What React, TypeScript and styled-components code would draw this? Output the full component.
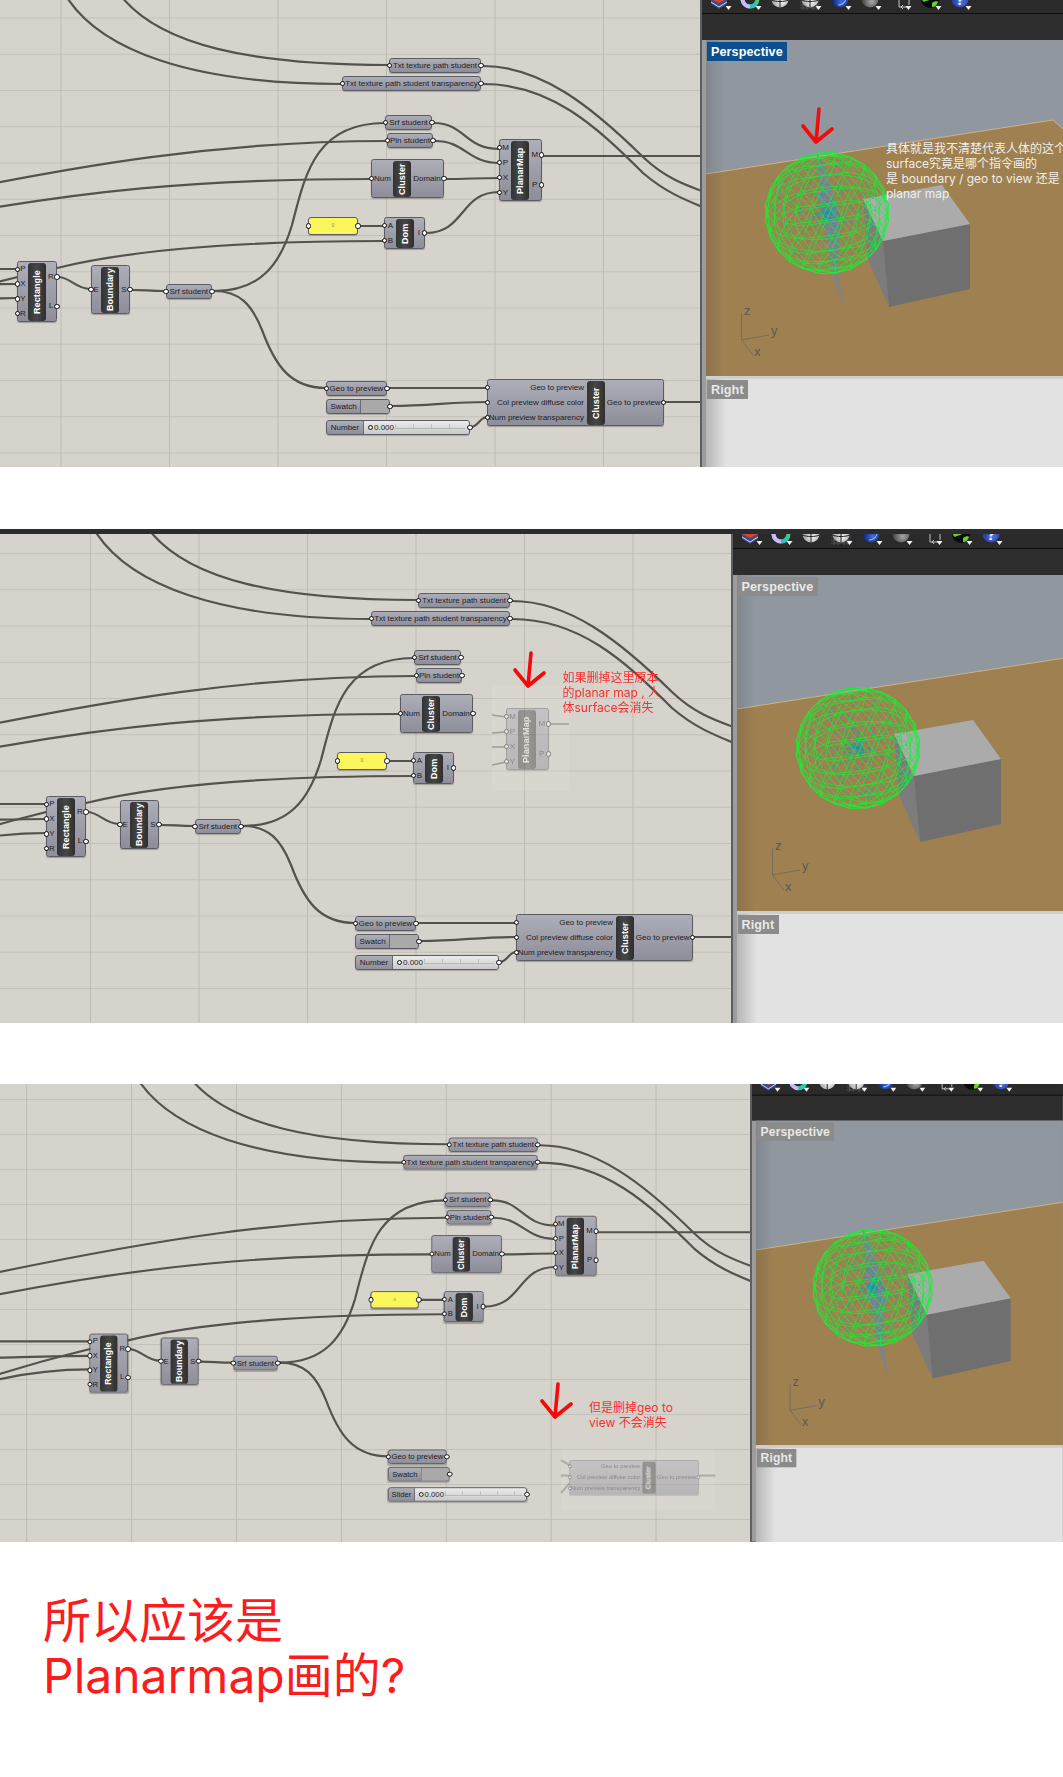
import React, { useId } from 'react';
import styled, { createGlobalStyle } from 'styled-components';

const Global = createGlobalStyle`
  html, body { margin: 0; padding: 0; background: #fff; }
  body { font-family: "Liberation Sans", "Noto Sans CJK SC", sans-serif; }
`;

const Page = styled.div`
  width: 1063px;
  height: 1777px;
  overflow: hidden;
  display: flex;
  flex-direction: column;
`;

const Shot = styled.section<{ $h: number; $gap: number }>`
  display: flex;
  flex-direction: column;
  height: ${p => p.$h}px;
  margin-bottom: ${p => p.$gap}px;
  flex: none;
  position: relative;
`;

const TopStrip = styled.div`
  height: 5px;
  flex: none;
  background: #2c2c2e;
  margin-bottom: -5px;
  position: relative;
  z-index: 3;
`;

const ShotBody = styled.div`
  flex: 1;
  min-height: 0;
  display: flex;
`;

const Canvas = styled.div<{ $w: number; $pad: number; $gx: number; $gy: number; $cw: number; $ch: number }>`
  width: ${p => p.$w}px;
  flex: none;
  margin-top: ${p => p.$pad}px;
  position: relative;
  overflow: hidden;
  background-color: #d6d3cc;
  background-image:
    linear-gradient(to right, #bdbab3 1px, transparent 1px),
    linear-gradient(to bottom, #c3c0b9 1px, transparent 1px);
  background-size: ${p => p.$cw}px ${p => p.$ch}px;
  background-position: ${p => p.$gx}px ${p => p.$gy}px;
`;

const GraphLayer = styled.div<{ $dx: number; $dy: number; $s: number }>`
  position: absolute;
  left: 0;
  top: 0;
  width: 760px;
  height: 520px;
  transform-origin: 0 0;
  transform: translate(${p => p.$dx}px, ${p => p.$dy}px) scale(${p => p.$s});
`;

const WireSvg = styled.svg`
  position: absolute;
  left: -120px;
  top: -20px;
  width: 900px;
  height: 560px;
  fill: none;
  stroke: #53524e;
  stroke-width: 2.2;
  stroke-linecap: round;
`;

const Node = styled.div<{ $x: number; $y: number; $w: number; $h: number }>`
  position: absolute;
  left: ${p => p.$x}px;
  top: ${p => p.$y}px;
  width: ${p => p.$w}px;
  height: ${p => p.$h}px;
  box-sizing: border-box;
  display: flex;
  align-items: stretch;
  border: 1px solid #5b5b63;
  border-radius: 2.5px;
  background: linear-gradient(#aeaeb9, #8e8e9a);
  box-shadow: 0 1px 1px rgba(60, 60, 60, 0.35);
  color: #1c1c22;
  font-size: 8px;
  line-height: 1;
  white-space: nowrap;
`;

const Pill = styled.div`
  flex: none;
  width: 18px;
  margin: 0.5px 0;
  border-radius: 3px;
  background: linear-gradient(to right, #2e2e2e, #474747 50%, #333);
  color: #fff;
  font-weight: 700;
  font-size: 9px;
  letter-spacing: 0.1px;
  display: flex;
  align-items: center;
  justify-content: center;
  writing-mode: vertical-rl;
  transform: rotate(180deg);
`;

const PortCol = styled.div<{ $w?: number }>`
  display: flex;
  flex-direction: column;
  ${p => (p.$w ? `width: ${p.$w}px; flex: none;` : 'flex: 1; min-width: 0;')}
`;

const portDot = `
  content: "";
  position: absolute;
  top: 50%;
  width: 5.5px;
  height: 5.5px;
  margin-top: -2.75px;
  box-sizing: border-box;
  border: 1.4px solid #0c0c0c;
  border-radius: 50%;
  background: #fff;
`;

const PortRow = styled.div<{ $side: 'in' | 'out'; $end?: boolean }>`
  flex: 1;
  min-height: 0;
  position: relative;
  display: flex;
  align-items: center;
  justify-content: ${p => (p.$end ? 'flex-end' : 'center')};
  padding-right: ${p => (p.$end ? '3px' : '0')};
  &::before {
    ${portDot}
    ${p => (p.$side === 'in' ? 'left: -3.5px;' : 'right: -3.5px;')}
  }
`;

const Param = styled.div<{ $x: number; $y: number; $w: number; $h?: number; $in?: boolean; $bg?: string }>`
  position: absolute;
  left: ${p => p.$x}px;
  top: ${p => p.$y}px;
  width: ${p => p.$w}px;
  height: ${p => p.$h ?? 15}px;
  box-sizing: border-box;
  display: flex;
  align-items: stretch;
  border: 1px solid #5b5b63;
  border-radius: 3px;
  background: ${p => p.$bg ?? 'linear-gradient(#aeaeb9, #8e8e9a)'};
  box-shadow: 0 1px 1px rgba(60, 60, 60, 0.3);
  color: #1c1c22;
  font-size: 8px;
  line-height: 1;
  white-space: nowrap;
  &::after {
    ${portDot}
    right: -3.5px;
  }
  ${p => (p.$in ? `&::before { ${portDot} left: -3.5px; }` : '')}
`;

const ParamLabel = styled.span<{ $w?: number }>`
  display: flex;
  align-items: center;
  justify-content: center;
  ${p => (p.$w ? `width: ${p.$w}px; flex: none;` : 'flex: 1;')}
`;

const SwatchFill = styled.span`
  flex: 1;
  background: #a9a9a9;
  border-left: 1px solid #6a6a70;
  border-radius: 0 2px 2px 0;
`;

const SliderBody = styled.span`
  flex: 1;
  display: flex;
  align-items: center;
  gap: 1px;
  padding: 0 4px 0 4px;
  background: linear-gradient(#ececec, #c9c9c9);
  border-left: 1px solid #6a6a70;
  border-radius: 0 2px 2px 0;
  color: #222;
`;

const Knob = styled.span`
  width: 5px;
  height: 5px;
  flex: none;
  box-sizing: border-box;
  border: 1.4px solid #111;
  border-radius: 50%;
  background: #eee;
`;

const Rail = styled.span`
  flex: 1;
  height: 4px;
  margin-top: -2px;
  border-bottom: 1px solid #b8b8b8;
  background: repeating-linear-gradient(to right, #c0c0c0 0 1px, transparent 1px 18px);
`;

const PanelNum = styled.span`
  flex: 1;
  text-align: center;
  align-self: center;
  font-size: 4.5px;
  color: #8a8440;
`;

const Ghost = styled.div<{ $x: number; $y: number; $w: number; $h: number }>`
  position: absolute;
  left: ${p => p.$x}px;
  top: ${p => p.$y}px;
  width: ${p => p.$w}px;
  height: ${p => p.$h}px;
  opacity: 0.42;
  background: rgba(224, 221, 214, 0.6);
`;

const GhostStubs = styled.svg`
  position: absolute;
  inset: 0;
  width: 100%;
  height: 100%;
  fill: none;
  stroke: #55534f;
  stroke-width: 1.6;
`;

const GhostScale = styled.div<{ $s: number; $x: number; $y: number }>`
  position: absolute;
  left: ${p => p.$x}px;
  top: ${p => p.$y}px;
  width: 0;
  height: 0;
  transform-origin: 0 0;
  transform: scale(${p => p.$s});
`;

const RedNote = styled.div<{ $x: number; $y: number }>`
  position: absolute;
  left: ${p => p.$x}px;
  top: ${p => p.$y}px;
  font-family: "Inter", "Noto Sans CJK SC", sans-serif;
  font-size: 12px;
  line-height: 15px;
  color: #f5312f;
  white-space: pre;
  z-index: 2;
`;

const WhiteNote = styled(RedNote)`
  color: #f1efea;
`;

const ArrowSvg = styled.svg<{ $x: number; $y: number }>`
  position: absolute;
  left: ${p => p.$x}px;
  top: ${p => p.$y}px;
  width: 36px;
  height: 40px;
  fill: none;
  stroke: #f40a0a;
  stroke-width: 3.6;
  stroke-linecap: round;
  stroke-linejoin: round;
  z-index: 2;
`;

const Side = styled.aside`
  flex: 1;
  min-width: 0;
  overflow: hidden;
  background: #3a3a3a;
`;

const SideInner = styled.div<{ $s: number }>`
  width: ${p => 100 / p.$s}%;
  height: ${p => 100 / p.$s}%;
  transform-origin: 0 0;
  transform: scale(${p => p.$s});
  box-sizing: border-box;
  border-left: 2px solid #5e5e5e;
  background: #9c9c9c;
  display: flex;
  flex-direction: column;
`;

const Toolbar = styled.div<{ $h: number }>`
  height: ${p => p.$h}px;
  flex: none;
  background: #2d2d2d;
`;

const IconStrip = styled.div<{ $h: number }>`
  height: ${p => p.$h}px;
  box-sizing: border-box;
  padding-left: 5px;
  padding-bottom: 1px;
  display: flex;
  align-items: flex-end;
  overflow: hidden;
  background: #2a2a2a;
  border-bottom: 1px solid #0e0e0e;
`;

const IconSvg = styled.svg`
  flex: none;
  width: 30px;
  height: 24px;
`;

const Viewport = styled.div`
  height: 336px;
  flex: none;
  margin-left: 4px;
  position: relative;
  overflow: hidden;
  background: #90979f;
  &::after {
    content: "";
    position: absolute;
    inset: 0 auto 0 0;
    width: 18px;
    background: linear-gradient(to right, rgba(50, 50, 50, 0.16), transparent);
    pointer-events: none;
  }
`;

const RightPane = styled.div`
  height: 220px;
  flex: none;
  margin-left: 4px;
  position: relative;
  box-sizing: border-box;
  border-top: 3px solid #cfcfcf;
  background: linear-gradient(to right, #b6b6b6, #e2e2e2 20px);
`;

const SceneSvg = styled.svg`
  position: absolute;
  left: 0;
  top: 0;
  width: 357px;
  height: 336px;
`;

const ViewTag = styled.div<{ $active?: boolean; $top: number; $w: number }>`
  position: absolute;
  left: 1px;
  top: ${p => p.$top}px;
  width: ${p => p.$w}px;
  height: 19px;
  box-sizing: border-box;
  padding-left: 4px;
  display: flex;
  align-items: center;
  font-size: 12.6px;
  font-weight: 700;
  letter-spacing: 0.1px;
  color: ${p => (p.$active ? '#ffffff' : '#e8e8e8')};
  background: ${p => (p.$active ? '#0b4f8e' : '#8b8b8b')};
  z-index: 1;
`;

const Caption = styled.div`
  padding: 51px 0 0 43px;
  font-family: "Inter", "Noto Sans CJK SC", sans-serif;
  font-size: 48px;
  line-height: 55px;
  color: #fb1d1d;
  white-space: pre;
`;

/* ---------- graph pieces ---------- */

type CompProps = {
  x: number; y: number; w: number; h: number; inW: number;
  name: string; ins: string[]; outs: string[]; endIns?: boolean;
};

const Comp = ({ x, y, w, h, inW, name, ins, outs, endIns }: CompProps) => (
  <Node $x={x} $y={y} $w={w} $h={h}>
    <PortCol $w={inW}>
      {ins.map(t => <PortRow key={t} $side="in" $end={endIns}>{t}</PortRow>)}
    </PortCol>
    <Pill>{name}</Pill>
    <PortCol>
      {outs.map(t => <PortRow key={t} $side="out">{t}</PortRow>)}
    </PortCol>
  </Node>
);

const BigCluster = ({ x, y }: { x: number; y: number }) => (
  <Comp x={x} y={y} w={176.5} h={47} inW={99} name="Cluster" endIns
    ins={['Geo to preview', 'Col preview diffuse color', 'Num preview transparency']}
    outs={['Geo to preview']} />
);

const PlanarMap = ({ x, y }: { x: number; y: number }) => (
  <Comp x={x} y={y} w={42.5} h={62} inW={11} name="PlanarMap" ins={['M', 'P', 'X', 'Y']} outs={['M', 'P']} />
);

const baseWires = [
  'M66,-4 C100,50 190,84 342,84',
  'M121,-4 C160,45 250,65 389,65',
  'M483,66 C540,66 590,105 643,157 C665,178 685,185 710,194',
  'M483,84 C550,84 595,125 643,173 C665,192 685,200 710,210',
  'M-80,198 C80,165 220,141 387,141',
  'M-80,221 C80,190 200,179 371,179',
  'M360,226 L384,226',
  'M-80,304 C-40,292 0,280 57,268 C130,250 240,241 384,241',
  'M214,291 C260,291 280,265 292,225 C305,175 315,123 385,123',
  'M214,291 C240,291 252,305 262,330 C275,365 290,388 326,388',
  'M58,277 C70,277 76,289 90,289',
  'M132,290 C145,290 150,291 165,291',
  'M-80,269 L17,269',
  'M-80,286 C-40,285 -10,284 17,284',
  'M-80,309 C-40,300 -10,298 17,298',
];
const planarWires = [
  'M434,123 C465,123 465,149 499,149',
  'M435,141 C465,141 468,163 499,163',
  'M446,179 C465,179 480,178 499,178',
  'M426,233 C465,233 460,192 499,192',
  'M544,156 L710,156',
];
const previewWires = [
  'M389,388 C420,388 450,388 487,388',
  'M391,406 C430,406 450,402 487,402',
  'M471,427 C478,427 480,417 487,417',
  'M666,402 L710,402',
];

type GraphProps = { planar: boolean; preview: boolean; sliderLabel: string; sliderW: number; children?: React.ReactNode };

const Graph = ({ planar, preview, sliderLabel, sliderW, children }: GraphProps) => {
  const wires = [...baseWires, ...(planar ? planarWires : []), ...(preview ? previewWires : [])];
  return (
    <>
      <WireSvg viewBox="-120 -20 900 560">
        {wires.map(d => <path key={d} d={d} />)}
      </WireSvg>
      <Param $x={389} $y={58} $w={92} $in><ParamLabel>Txt texture path student</ParamLabel></Param>
      <Param $x={342} $y={76} $w={139} $in><ParamLabel>Txt texture path student transparency</ParamLabel></Param>
      <Param $x={385} $y={115} $w={47} $in><ParamLabel>Srf student</ParamLabel></Param>
      <Param $x={387} $y={133} $w={46} $in><ParamLabel>Pln student</ParamLabel></Param>
      <Comp x={371} y={159} w={73} h={39} inW={21} name="Cluster" ins={['Num']} outs={['Domain']} />
      {planar && <PlanarMap x={499} y={139} />}
      <Param $x={308} $y={217} $w={50} $h={18} $in $bg="#fbf65c"><PanelNum>0</PanelNum></Param>
      <Comp x={384} y={217} w={40.5} h={32} inW={11} name="Dom" ins={['A', 'B']} outs={['I']} />
      <Comp x={17} y={261} w={40} h={61} inW={10} name="Rectangle" ins={['P', 'X', 'Y', 'R']} outs={['R', 'L']} />
      <Comp x={90.5} y={265} w={39.5} h={49} inW={9.5} name="Boundary" ins={['E']} outs={['S']} />
      <Param $x={165.5} $y={284} $w={46.5} $in><ParamLabel>Srf student</ParamLabel></Param>
      <Param $x={326} $y={381} $w={61} $in><ParamLabel>Geo to preview</ParamLabel></Param>
      <Param $x={326} $y={399} $w={64}><ParamLabel $w={33}>Swatch</ParamLabel><SwatchFill /></Param>
      <Param $x={326} $y={420} $w={144}>
        <ParamLabel $w={sliderW}>{sliderLabel}</ParamLabel>
        <SliderBody><Knob />0.000<Rail /></SliderBody>
      </Param>
      {preview && <BigCluster x={487} y={379} />}
      {children}
    </>
  );
};

/* ---------- 3D viewport scene ---------- */

type V3 = [number, number, number];
const norm = (v: V3): V3 => {
  const l = Math.hypot(v[0], v[1], v[2]);
  return [v[0] / l, v[1] / l, v[2] / l];
};

const buildSphere = () => {
  const t = (1 + Math.sqrt(5)) / 2;
  let verts: V3[] = ([
    [-1, t, 0], [1, t, 0], [-1, -t, 0], [1, -t, 0],
    [0, -1, t], [0, 1, t], [0, -1, -t], [0, 1, -t],
    [t, 0, -1], [t, 0, 1], [-t, 0, -1], [-t, 0, 1],
  ] as V3[]).map(norm);
  let faces: [number, number, number][] = [
    [0, 11, 5], [0, 5, 1], [0, 1, 7], [0, 7, 10], [0, 10, 11],
    [1, 5, 9], [5, 11, 4], [11, 10, 2], [10, 7, 6], [7, 1, 8],
    [3, 9, 4], [3, 4, 2], [3, 2, 6], [3, 6, 8], [3, 8, 9],
    [4, 9, 5], [2, 4, 11], [6, 2, 10], [8, 6, 7], [9, 8, 1],
  ];
  for (let k = 0; k < 2; k++) {
    const cache = new Map<string, number>();
    const mid = (a: number, b: number) => {
      const key = a < b ? `${a}_${b}` : `${b}_${a}`;
      if (cache.has(key)) return cache.get(key)!;
      const m = norm([
        verts[a][0] + verts[b][0],
        verts[a][1] + verts[b][1],
        verts[a][2] + verts[b][2],
      ]);
      verts = [...verts, m];
      cache.set(key, verts.length - 1);
      return verts.length - 1;
    };
    const next: [number, number, number][] = [];
    faces.forEach(([a, b, c]) => {
      const ab = mid(a, b); const bc = mid(b, c); const ca = mid(c, a);
      next.push([a, ab, ca], [b, bc, ab], [c, ca, bc], [ab, bc, ca]);
    });
    faces = next;
  }
  const ax = 0.83; const ay = 0.61; const az = 0.37;
  const proj = verts.map(([x, y, z]) => {
    const x1 = x * Math.cos(ay) + z * Math.sin(ay);
    const z1 = -x * Math.sin(ay) + z * Math.cos(ay);
    const y1 = y * Math.cos(ax) - z1 * Math.sin(ax);
    const x2 = x1 * Math.cos(az) - y1 * Math.sin(az);
    const y2 = x1 * Math.sin(az) + y1 * Math.cos(az);
    return [x2 * 62, y2 * 61] as [number, number];
  });
  const seen = new Set<string>();
  let d = '';
  faces.forEach(([a, b, c]) => {
    ([[a, b], [b, c], [c, a]] as [number, number][]).forEach(([p, q]) => {
      const key = p < q ? `${p}_${q}` : `${q}_${p}`;
      if (seen.has(key)) return;
      seen.add(key);
      d += `M${proj[p][0].toFixed(1)},${proj[p][1].toFixed(1)}L${proj[q][0].toFixed(1)},${proj[q][1].toFixed(1)}`;
    });
  });
  return d;
};

const buildDots = () => {
  let seed = 12345;
  const rnd = () => {
    seed = (seed * 16807) % 2147483647;
    return seed / 2147483647;
  };
  const dots: [number, number][] = [];
  for (let i = 0; i < 700; i++) {
    const r = 54 * Math.pow(rnd(), 1.6);
    const a = rnd() * Math.PI * 2;
    dots.push([r * Math.cos(a), r * Math.sin(a)]);
  }
  return dots;
};

const SPHERE = buildSphere();
const DOTS = buildDots();

const Scene = ({ blade }: { blade: boolean }) => (
  <SceneSvg viewBox="6 40 357 336">
    <polygon points="6,174 353,120 363,129 363,376 6,376" fill="#9e8051" />
    <polyline points="6,174 353,120 363,129" fill="none" stroke="#d9bd8e" strokeWidth="0.8" />
    <polygon points="163,199 183,241 189,307 168,260" fill="#7c7c7c" />
    <polygon points="183,241 270,224 270,289 189,307" fill="#6f6f6f" />
    <polygon points="163,199 242,185 270,224 183,241" fill="#ababab" />
    {blade && (
      <polygon points="117,153 128,173 140,220 138,273 144,308 132,273 128,247 120,200" fill="#7f8288" />
    )}
    <g transform="translate(126,212)">
      {DOTS.map(([x, y], i) => (
        <rect key={i} x={x} y={y} width="0.9" height="0.9" fill="#1597b8" />
      ))}
    </g>
    <path transform="translate(127,213)" d={SPHERE} fill="none" stroke="#0cf730" strokeWidth="0.65" />
    <g stroke="#6d675b" strokeWidth="0.8" fill="none">
      <path d="M41.5,340 L41.5,313 M41.5,340 L69,335 M41.5,340 L53,355" />
    </g>
    <g fill="#5d5a52" fontSize="13" fontFamily='"Liberation Sans", sans-serif'>
      <text x="44" y="315">z</text>
      <text x="71" y="335">y</text>
      <text x="54" y="356">x</text>
    </g>
  </SceneSvg>
);

/* ---------- toolbar icons ---------- */

const Tri = () => <polygon points="18.5,18 24.5,18 21.5,22" fill="#f2f2f2" />;

const ToolIcon = ({ kind }: { kind: number }) => {
  const id = useId();
  return (
    <IconSvg viewBox="0 0 30 24">
      <defs>
        <radialGradient id={id} cx="0.6" cy="0.65" r="0.7">
          <stop offset="0" stopColor={kind === 4 ? '#3d6fe6' : kind === 5 ? '#a8a8a8' : kind === 8 ? '#4c6fe0' : '#f4f4f4'} />
          <stop offset="1" stopColor={kind === 4 ? '#041452' : kind === 5 ? '#2e2e2e' : kind === 8 ? '#1e2f8c' : '#8e8e8e'} />
        </radialGradient>
      </defs>
      {kind === 0 && (
        <g>
          <polygon points="4,6 20,6 20,16 12,21 4,16" fill="#3b4a8c" />
          <polygon points="4,3 20,3 20,11 12,15 4,11" fill="#d9452a" />
          <polyline points="4,14 12,19 20,14" fill="none" stroke="#dcdcdc" strokeWidth="1" />
        </g>
      )}
      {kind === 1 && (
        <g fill="none" strokeWidth="4">
          <circle cx="13" cy="11" r="7.5" stroke="#5ac85a" />
          <path d="M5.5,11 A7.5,7.5 0 0 0 13,18.5" stroke="#c9b7ff" />
          <path d="M13,18.5 A7.5,7.5 0 0 0 20,13" stroke="#28c8b0" />
          <path d="M5.5,11 A7.5,7.5 0 0 1 11,4" stroke="#e9418a" />
          <path d="M15,3.5 A7.5,7.5 0 0 1 20.5,11" stroke="#eadc28" />
        </g>
      )}
      {(kind === 2 || kind === 3) && (
        <g>
          {kind === 3 && (
            <path d="M3,14 H23 M3,17 H23 M3,20 H23 M6,10 V22 M10,10 V22 M16,10 V22 M20,10 V22" stroke="#666" strokeWidth="0.6" />
          )}
          <circle cx="13" cy="11" r="8.5" fill={`url(#${id})`} />
          <path d="M13,2.5 V19.5 M4.5,12 C8,14 18,14 21.5,12" stroke="#222" strokeWidth="1" fill="none" />
        </g>
      )}
      {(kind === 4 || kind === 5 || kind === 8) && <circle cx="13" cy="11" r="8.5" fill={`url(#${id})`} />}
      {kind === 4 && <path d="M11,17 C16,17 19,13 20,8" stroke="#8fb3ff" strokeWidth="1.2" fill="none" />}
      {kind === 5 && <polygon points="16,-1 21,-1 21,4 18,7" fill="#e8742a" />}
      {kind === 6 && (
        <g fill="none" stroke="#d5d5d5" strokeWidth="0.9">
          <path d="M1,7 H10 M5,4 V7 M10,5 H15 V10 H10 Z M12,10 V19 H21 M20,5 H24 V9 H20 Z M22,9 V17 M14,19 L16,17 M14,19 L16,21" />
        </g>
      )}
      {kind === 7 && (
        <g>
          <circle cx="13" cy="11" r="9" fill="#0a0a0a" />
          <path d="M6,5 C10,1 18,1 21,7 C20,10 16,9 14,11 C12,13 9,12 7,14 C4,12 4,8 6,5 Z" fill="#66d22c" />
          <path d="M15,15 C17,13 21,13 21,14 C20,17 18,19 15,19 Z" fill="#66d22c" />
        </g>
      )}
      {kind === 8 && (
        <text x="13" y="17" textAnchor="middle" fontSize="17" fontWeight="700" fill="#e6ecff" fontFamily='"Liberation Sans", sans-serif'>?</text>
      )}
      {kind !== 2 && <Tri />}
    </IconSvg>
  );
};

const TOOLS = [0, 1, 2, 3, 4, 5, 6, 7, 8];

type SidePanelProps = {
  scale: number; toolbar: number; active: boolean; blade: boolean; children?: React.ReactNode;
};

const SidePanel = ({ scale, toolbar, active, blade, children }: SidePanelProps) => (
  <Side>
    <SideInner $s={scale}>
      <Toolbar $h={toolbar}>
        <IconStrip $h={toolbar - 26}>
          {TOOLS.map(k => <ToolIcon key={k} kind={k} />)}
        </IconStrip>
      </Toolbar>
      <Viewport>
        <Scene blade={blade} />
        <ViewTag $active={active} $top={2} $w={80}>Perspective</ViewTag>
        {children}
      </Viewport>
      <RightPane>
        <ViewTag $top={1} $w={41}>Right</ViewTag>
      </RightPane>
    </SideInner>
  </Side>
);

const RedArrow = ({ x, y }: { x: number; y: number }) => (
  <ArrowSvg $x={x} $y={y} viewBox="0 0 36 40">
    <path d="M19,3 L16,36 M3,20 L16,36 L32,23" />
  </ArrowSvg>
);

export default function App() {
  return (
    <Page>
      <Global />
      <Shot $h={467} $gap={62}>
        <ShotBody>
          <Canvas $w={700} $pad={0} $gx={60.5} $gy={17.5} $cw={108.5} $ch={36.25}>
            <GraphLayer $dx={0} $dy={0} $s={1}>
              <Graph planar preview sliderLabel="Number" sliderW={36} />
            </GraphLayer>
          </Canvas>
          <SidePanel scale={1} toolbar={40} active blade>
            <RedArrow x={94} y={66} />
            <WhiteNote $x={180} $y={101}>{'具体就是我不清楚代表人体的这个\nsurface究竟是哪个指令画的\n是 boundary / geo to view 还是\nplanar map'}</WhiteNote>
          </SidePanel>
        </ShotBody>
      </Shot>

      <Shot $h={494} $gap={61}>
        <TopStrip />
        <ShotBody>
          <Canvas $w={730.5} $pad={5} $gx={90} $gy={19} $cw={108.5} $ch={36.25}>
            <GraphLayer $dx={29} $dy={1} $s={1}>
              <Graph planar={false} preview sliderLabel="Number" sliderW={36}>
                <Ghost $x={463} $y={151} $w={77} $h={105}>
                  <GhostStubs viewBox="0 0 77 105">
                    <path d="M0,29 L14,31 M0,47 L14,46 M0,61 L14,61 M0,79 L14,76 M57,38 L77,38" />
                  </GhostStubs>
                  <PlanarMap x={14} y={22} />
                </Ghost>
              </Graph>
            </GraphLayer>
            <RedArrow x={511.5} y={116} />
            <RedNote $x={562.5} $y={136}>{'如果删掉这里原本\n的planar map , 人\n体surface会消失'}</RedNote>
          </Canvas>
          <SidePanel scale={1} toolbar={46} active={false} blade={false} />
        </ShotBody>
      </Shot>

      <Shot $h={458} $gap={0}>
        <ShotBody>
          <Canvas $w={750} $pad={0} $gx={26.2} $gy={15} $cw={104.9} $ch={35}>
            <GraphLayer $dx={73} $dy={-2.5} $s={0.966}>
              <Graph planar preview={false} sliderLabel="Slider" sliderW={26}>
                <Ghost $x={505} $y={380.5} $w={160} $h={63}>
                  <GhostStubs viewBox="0 0 160 63">
                    <path d="M0,11 L9,16 M0,27 L9,27 M0,45 L9,35 M143,27 L160,27" />
                  </GhostStubs>
                  <GhostScale $s={0.755} $x={9.3} $y={11.4}>
                    <BigCluster x={0} y={0} />
                  </GhostScale>
                </Ghost>
              </Graph>
            </GraphLayer>
            <RedArrow x={539} y={297} />
            <RedNote $x={589} $y={315.5}>{'但是删掉geo to\nview 不会消失'}</RedNote>
          </Canvas>
          <SidePanel scale={0.9655} toolbar={38} active={false} blade />
        </ShotBody>
      </Shot>

      <Caption>{'所以应该是\nPlanarmap画的?'}</Caption>
    </Page>
  );
}
